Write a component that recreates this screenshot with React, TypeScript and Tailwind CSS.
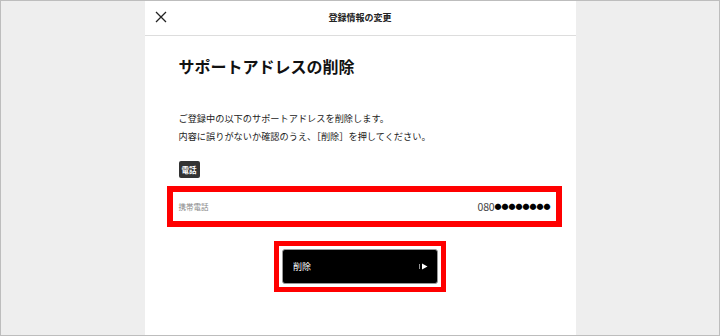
import React from 'react';

// Стрелка внутри кнопки: вертикальная черта и треугольник
const PlayArrow: React.FC = () => (
  <svg width="9" height="7" viewBox="0 0 9 7" aria-hidden="true">
    <rect x="0" y="1" width="0.8" height="5" fill="#bbb" />
    <path d="M3 0.5 L8.5 3.5 L3 6.5 Z" fill="#fff" />
  </svg>
);

const CloseIcon: React.FC = () => (
  <svg width="12" height="12" viewBox="0 0 12 12" aria-hidden="true">
    <path d="M1 1 L11 11 M11 1 L1 11" stroke="#222" strokeWidth="1.3" />
  </svg>
);

export default function App() {
  return (
    <div
      className="w-[720px] h-[336px] bg-[#eeeeee] border border-[#bdbdbd] flex justify-center overflow-hidden"
      style={{ fontFamily: '"Noto Sans CJK JP", "Noto Sans", sans-serif' }}
    >
      <div className="w-[431px] h-full bg-white flex flex-col">
        {/* Header */}
        <div className="h-[35px] shrink-0 border-b border-[#dddddd] relative flex items-center justify-center">
          <div className="absolute left-[10px] top-[10px]">
            <CloseIcon />
          </div>
          <span className="text-[9px] font-bold text-[#222]">登録情報の変更</span>
        </div>

        {/* Content */}
        <div className="pl-[34px] pr-[14px] flex flex-col">
          <h1 className="mt-[18px] text-[16px] leading-[24px] font-bold text-[#111]">
            サポートアドレスの削除
          </h1>

          <div className="mt-[31px] text-[9.2px] leading-[18px] text-[#222]">
            <p>ご登録中の以下のサポートアドレスを削除します。</p>
            <p>内容に誤りがないか確認のうえ、［削除］を押してください。</p>
          </div>

          <div className="mt-[16px] w-[21px] h-[17px] bg-[#333] rounded-[2px] flex items-center justify-center">
            <span className="text-[7.5px] font-bold text-white">電話</span>
          </div>

          {/* Номер телефона в красной рамке */}
          <div className="mt-[8px] -ml-[12px] w-[395px] h-[41px] border-[6px] border-[#ff0000] bg-white flex items-center justify-between pl-[6px] pr-[5px]">
            <span className="text-[7.5px] text-[#888]">携帯電話</span>
            <span className="flex items-center">
              <span className="text-[10.5px] text-[#444] tracking-[-0.2px]">080</span>
              <span className="text-[7px] text-black leading-none">●●●●●●●●</span>
            </span>
          </div>
        </div>

        {/* Кнопка удаления */}
        <div className="mt-[14px] self-center w-[172px] h-[51px] border-[5px] border-[#ff0000] p-[3px] bg-white">
          <button className="w-full h-full bg-black rounded-[3px] border border-[#999] flex items-center justify-between pl-[10px] pr-[9px]">
            <span className="text-[9px] text-white">削除</span>
            <PlayArrow />
          </button>
        </div>
      </div>
    </div>
  );
}
